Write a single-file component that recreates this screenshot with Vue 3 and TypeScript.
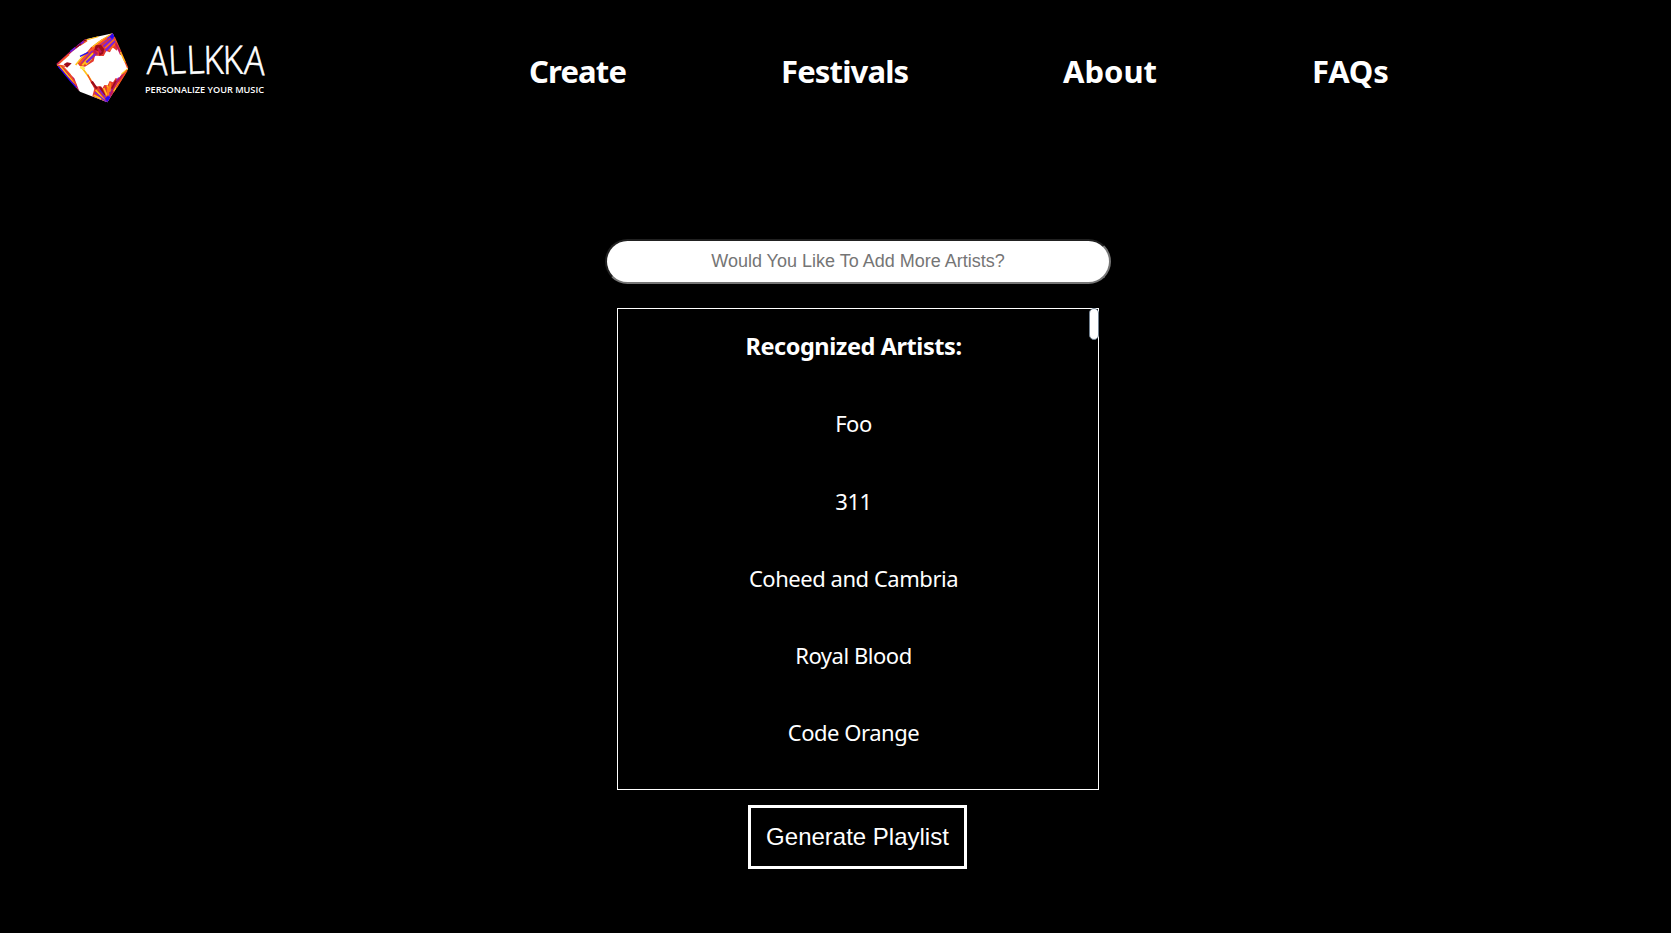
<script setup lang="ts">
interface NavLink {
  label: string
  name: string
}

const links: NavLink[] = [
  { label: 'Create', name: 'create' },
  { label: 'Festivals', name: 'festivals' },
  { label: 'About', name: 'about' },
  { label: 'FAQs', name: 'faqs' },
]

const artists: string[] = ['Foo', '311', 'Coheed and Cambria', 'Royal Blood', 'Code Orange']
</script>

<template>
  <div class="page">
    <header class="header">
      <svg class="logo" width="235" height="95" viewBox="0 0 235 95" role="img" aria-label="Allkka">
        <g transform="scale(0.33333)" fill="none" stroke-width="5">
          <polygon fill="#fff" points="35,134 122,58 203,40 249,146 187,247 105,215" />
          <!-- upper left edge -->
          <path stroke="#c2185b" d="M36 133L84 90L122 59" />
          <path stroke="#f4511e" d="M42 130L72 103M104 76L126 62" />
          <path stroke="#6a1be0" d="M76 95L92 82M98 78L116 65" />
          <path stroke="#8b0a14" stroke-width="4" d="M92 84L108 71M116 63L126 59" />
          <path stroke="#ffb300" stroke-width="3" d="M124 60L160 50" />
          <!-- top right edge -->
          <polygon fill="#e5392f" points="203,40 168,59 138,82 98,130 104,138 120,140 146,124 150,107 176,108 184,93 195,97 202,82 216,92 220,78" />
          <path stroke="#ffc21a" d="M196 45L160 68L142 82M120 101L92 135" />
          <path stroke="#7a22dd" stroke-width="6" d="M202 45L164 73M142 91L106 128" />
          <path stroke="#ff5722" stroke-width="6" d="M186 54L136 92L102 131" />
          <path stroke="#ffc21a" stroke-width="6" d="M144 100L112 136M140 115L122 134" />
          <path stroke="#7a22dd" stroke-width="7" d="M206 53L176 80M156 98L124 127M210 62L182 92" />
          <polygon fill="#9c0c1c" points="152,76 168,74 178,88 174,101 163,108 162,94 148,90" />
          <path stroke="#c2185b" stroke-width="7" d="M158 84L168 98M147 91L155 103" />
          <path stroke="#ff6a1c" d="M208 58L180 84M212 70L192 92" />
          <polygon fill="#2a08f0" points="203,39 208,50 201,57 194,50" />
          <path stroke="#2a08f0" stroke-width="4" d="M105 109L130 97" />
          <path stroke="#f4511e" stroke-width="4" d="M208 52L224 88L248 144" />
          <path stroke="#c2185b" stroke-width="6" d="M212 70L222 90L228 104" />
          <path stroke="#ffc21a" stroke-width="4" d="M226 96L240 126" />
          <!-- lower left edge -->
          <polygon fill="#c2185b" points="35,134 52,138 68,155 88,175 103,214 77,184" />
          <path stroke="#2a08f0" stroke-width="4" d="M40 139L78 185L94 202" />
          <path stroke="#ffc21a" stroke-width="4" d="M44 137L70 168L90 190" />
          <path stroke="#f4511e" stroke-width="4" d="M52 138L74 162L94 196" />
          <polygon fill="#9c0c1c" points="56,133 66,127 80,130 74,136 66,143" />
          <path stroke="#f4511e" stroke-width="4" d="M36 135L62 139" />
          <!-- inner edge -->
          <path stroke="#ffc21a" d="M107 139L120 155L138 180" />
          <path stroke="#ffeb52" stroke-width="8" d="M106 141L119 147" />
          <path stroke="#f4511e" stroke-width="4" d="M128 164L140 188L158 216" />
          <!-- bottom edges -->
          <polygon fill="#e5392f" points="134,176 146,186 152,200 164,198 172,205 178,195 188,196 194,183 204,187 212,174 220,177 230,163 248,146 240,164 187,247 142,229 148,206" />
          <path stroke="#9c0c1c" stroke-width="7" d="M140 185L156 206M165 200L178 226" />
          <path stroke="#ffc21a" d="M152 210L178 240M176 204L186 226M186 196L196 214M146 226L168 236" />
          <path stroke="#7a22dd" stroke-width="4" d="M150 217L184 245M164 210L184 236" />
          <path stroke="#7a22dd" stroke-width="6" d="M222 173L204 204L188 240" />
          <path stroke="#c2185b" stroke-width="6" d="M238 160L214 188L196 226" />
          <path stroke="#ff7a16" stroke-width="6" d="M196 188L194 214M188 202L190 226" />
          <path stroke="#9c0c1c" d="M213 182L200 206" />
          <path stroke="#ffc21a" stroke-width="4" d="M248 147L230 162M222 188L206 214" />
          <polygon fill="#2a08f0" points="180,236 187,247 196,232 188,228" />
          <path stroke="#f4511e" stroke-width="4" d="M246 151L214 203" />
        </g>
        <text class="brand" transform="translate(0 54) scale(0.88 1)" x="115.5 140.5 161.7 180.3 202.3 226" rotate="3 -3 -3 -1 -1 3">ALLKKA</text>
        <text class="tagline" x="100" y="73" textLength="119" lengthAdjust="spacingAndGlyphs">PERSONALIZE YOUR MUSIC</text>
      </svg>
      <nav class="nav">
        <a v-for="link in links" :key="link.name" class="link" :class="link.name">{{ link.label }}</a>
      </nav>
    </header>

    <main class="main">
      <input class="search" type="text" placeholder="Would You Like To Add More Artists?" />
      <section class="panel">
        <div class="list">
          <h2 class="row title">Recognized Artists:</h2>
          <p v-for="artist in artists" :key="artist" class="row">{{ artist }}</p>
        </div>
        <div class="thumb"></div>
      </section>
      <button class="generate" type="button">Generate Playlist</button>
    </main>
  </div>
</template>

<style>
html,
body {
  background: #000;
}
</style>

<style scoped>
.page {
  box-sizing: border-box;
  height: 933px;
  overflow: hidden;
  background: #000;
  color: #fff;
  font-family: 'Segoe UI', 'Noto Sans', 'Open Sans', sans-serif;
}

.header {
  display: flex;
  height: 239px;
}

.logo {
  flex: none;
  margin: 20px 0 0 45px;
}

.brand {
  font: 300 39px 'Open Sans', sans-serif;
  fill: #fff;
  stroke: #fff;
  stroke-width: 0.7px;
}

.tagline {
  font: 600 9px 'Open Sans', sans-serif;
  fill: #fff;
}

.nav {
  display: flex;
  gap: 155px;
  margin: 49px 0 0 249px;
  height: 44px;
}

.link {
  font-size: 31px;
  font-weight: 700;
  line-height: 44px;
  white-space: nowrap;
}

.create {
  width: 97px;
  letter-spacing: -0.85px;
}

.festivals {
  width: 127px;
  letter-spacing: -0.85px;
}

.about {
  width: 94px;
}

.faqs {
  letter-spacing: -0.2px;
}

.main {
  display: flex;
  flex-direction: column;
  align-items: center;
  padding-left: 45px;
}

.search {
  box-sizing: border-box;
  width: 506px;
  height: 45px;
  padding: 0;
  border: 2px inset #767676;
  border-radius: 22.5px;
  background: #fff;
  font: 18px 'Liberation Sans', Arial, sans-serif;
  text-align: center;
}

.search::placeholder {
  color: #757575;
}

.panel {
  display: flex;
  box-sizing: border-box;
  width: 482px;
  height: 482px;
  margin-top: 24px;
  border: 1px solid #fff;
}

.list {
  flex: 1;
  padding-top: 15px;
  text-align: center;
}

.row {
  height: 44px;
  margin: 0 0 33.3px;
  font-size: 22px;
  font-weight: 400;
  letter-spacing: -0.46px;
  line-height: 44px;
}

.title {
  font-size: 23.5px;
  font-weight: 700;
  letter-spacing: -0.43px;
}

.thumb {
  box-sizing: border-box;
  width: 10px;
  height: 32px;
  margin: -1px -1px 0 0;
  border: 1px solid #708090;
  border-radius: 5px;
  background: #fff;
}

.generate {
  box-sizing: border-box;
  width: 219px;
  height: 64px;
  margin: 15px 1px 0 0;
  padding: 0;
  border: 3px solid #fff;
  background: #000;
  color: #fff;
  font: 24px 'Liberation Sans', Arial, sans-serif;
}
</style>
